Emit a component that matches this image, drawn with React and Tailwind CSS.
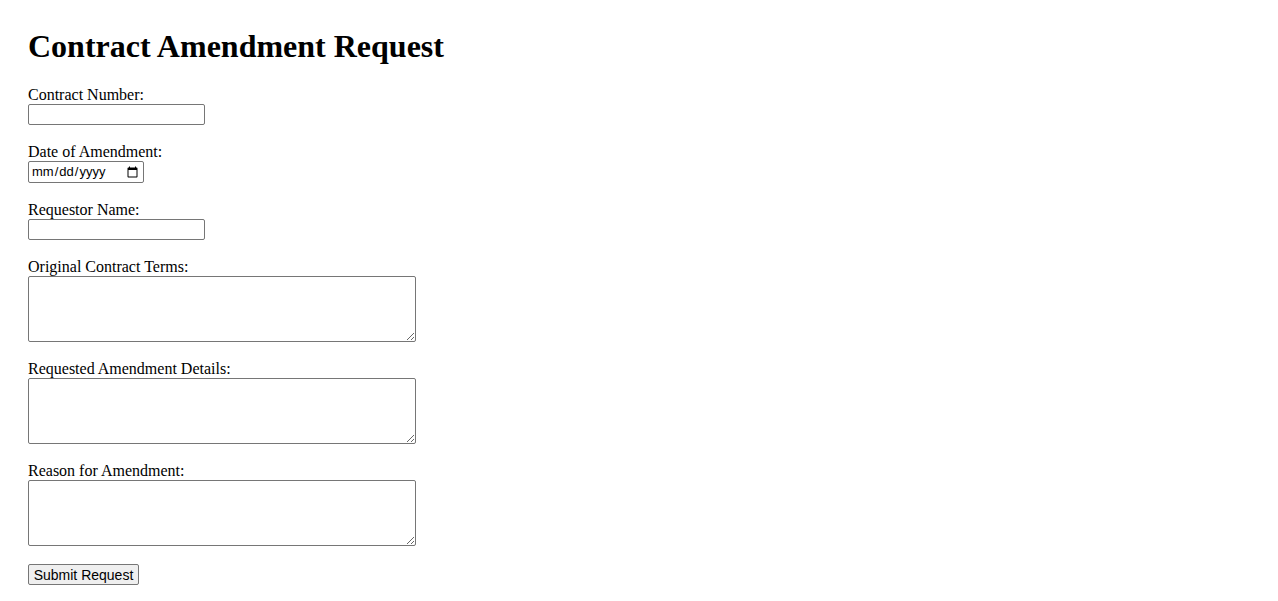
const fieldBox = 'block border border-[#767676] rounded-[2px] bg-white px-[2px] py-[1px] text-[13.33px] font-["Liberation_Sans",Arial,sans-serif]';

const Field = ({ label, children }) => (
    <div className="mb-[18px]">
        <label className="block text-[16px] leading-[18px]">{label}</label>
        {children}
    </div>
);

const App = () => {
    return (
        <div className='min-h-[601px] bg-white text-black px-[28px] pt-[28px] font-["Liberation_Serif","Times_New_Roman",serif]'>
            <h1 className="text-[32px] leading-[37px] font-bold mb-[21px]">Contract Amendment Request</h1>
            <form onSubmit={(e) => e.preventDefault()}>
                <Field label="Contract Number:">
                    <input type="text" className={`${fieldBox} w-[177px] h-[21px]`} />
                </Field>
                <Field label="Date of Amendment:">
                    <input type="date" className={`${fieldBox} w-[116px] h-[22px] font-["Liberation_Mono",monospace] text-[13px]`} />
                </Field>
                <Field label="Requestor Name:">
                    <input type="text" className={`${fieldBox} w-[177px] h-[21px]`} />
                </Field>
                <Field label="Original Contract Terms:">
                    <textarea className={`${fieldBox} w-[388px] h-[66px]`} />
                </Field>
                <Field label="Requested Amendment Details:">
                    <textarea className={`${fieldBox} w-[388px] h-[66px]`} />
                </Field>
                <Field label="Reason for Amendment:">
                    <textarea className={`${fieldBox} w-[388px] h-[66px]`} />
                </Field>
                <button type="submit" className='block w-[111px] h-[21px] border border-[#767676] rounded-[2px] bg-[#efefef] text-[14px] leading-[16px] font-["Liberation_Sans",Arial,sans-serif]'>
                    Submit Request
                </button>
            </form>
        </div>
    );
};

export default App;
